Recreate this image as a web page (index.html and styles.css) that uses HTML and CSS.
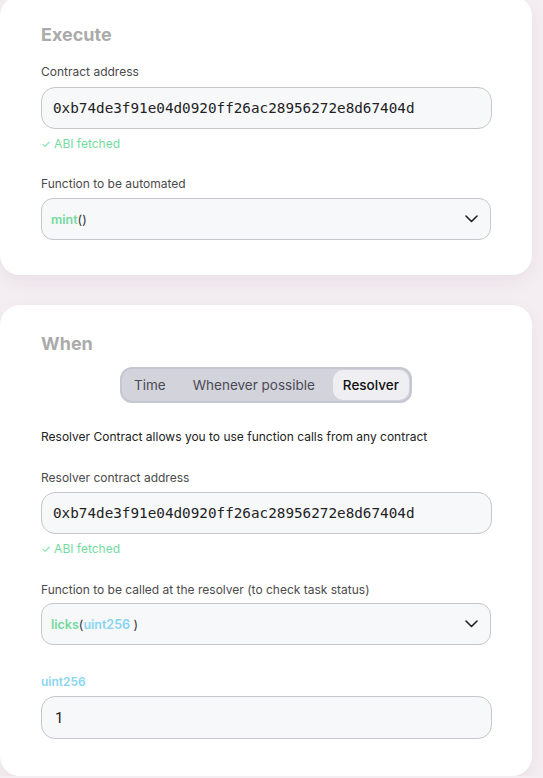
FILE: index.html
```html
<!DOCTYPE html>
<html>
<head>
<meta charset="utf-8">
<link rel="stylesheet" href="styles.css">
</head>
<body>
<div class="page">
  <section class="card card-first">
    <h2 class="card-title">Execute</h2>
    <div class="label label-first">Contract address</div>
    <div class="input mono">0xb74de3f91e04d0920ff26ac28956272e8d67404d</div>
    <div class="status"><span class="check">✓</span> ABI fetched</div>
    <div class="label label-gap">Function to be automated</div>
    <div class="select">
      <span class="fn"><span class="fn-name">mint</span>()</span>
      <svg class="chev" width="13" height="8" viewBox="0 0 13 8"><polyline points="1,1 6.5,6.5 12,1" fill="none" stroke="#222" stroke-width="1.6" stroke-linecap="round" stroke-linejoin="round"/></svg>
    </div>
  </section>

  <section class="card">
    <h2 class="card-title">When</h2>
    <div class="seg-wrap">
      <div class="seg">
        <span class="seg-item seg-time">Time</span>
        <span class="seg-item seg-when">Whenever possible</span>
        <span class="seg-item seg-active">Resolver</span>
      </div>
    </div>
    <p class="desc">Resolver Contract allows you to use function calls from any contract</p>
    <div class="label label-gap2">Resolver contract address</div>
    <div class="input mono">0xb74de3f91e04d0920ff26ac28956272e8d67404d</div>
    <div class="status"><span class="check">✓</span> ABI fetched</div>
    <div class="label label-gap3">Function to be called at the resolver (to check task status)</div>
    <div class="select select-tight">
      <span class="fn"><span class="fn-name">licks</span>(<span class="fn-arg">uint256</span> )</span>
      <svg class="chev" width="13" height="8" viewBox="0 0 13 8"><polyline points="1,1 6.5,6.5 12,1" fill="none" stroke="#222" stroke-width="1.6" stroke-linecap="round" stroke-linejoin="round"/></svg>
    </div>
    <div class="label label-arg">uint256</div>
    <div class="input input-num">1</div>
  </section>
</div>
</body>
</html>
```
FILE: styles.css
```css
html, body {
  margin: 0;
  padding: 0;
}
body {
  background: #f4eef2;
  font-family: Inter, "Noto Sans", sans-serif;
  color: #333;
}
.page {
  width: 532px;
  margin-top: -4px;
  display: flex;
  flex-direction: column;
  gap: 30px;
}
.card {
  background: #fff;
  border-radius: 20px;
  box-shadow: 0 6px 18px rgba(190, 160, 180, 0.18);
  padding: 27px 41px 37px 41px;
}
.card-first {
  padding-bottom: 35px;
}
.card-title {
  margin: 0;
  font-size: 18px;
  line-height: 24px;
  font-weight: 700;
  color: #ababab;
}
.label {
  font-size: 12px;
  line-height: 16px;
  color: #4a4a4a;
  margin-bottom: 7px;
}
.label-first { margin-top: 17px; }
.label-gap { margin-top: 24px; margin-bottom: 6px; }
.label-gap2 { margin-top: 25px; margin-bottom: 6px; }
.label-gap3 { margin-top: 25px; margin-bottom: 5px; }
.label-arg {
  margin-top: 29px;
  margin-bottom: 6px;
  color: #8ad6f0;
  font-weight: 600;
}
.input {
  box-sizing: border-box;
  height: 42px;
  width: 451px;
  border: 1px solid #c6c6cb;
  border-radius: 14px;
  background: #f7f8fa;
  display: flex;
  align-items: center;
  padding-left: 11px;
  color: #222;
}
.mono {
  font-family: "DejaVu Sans Mono", "Liberation Mono", monospace;
  font-size: 14.3px;
}
.input-num {
  height: 43px;
  font-size: 15px;
  font-family: Roboto, Inter, sans-serif;
  padding-left: 13px;
}
.status {
  margin-top: 7px;
  font-size: 12px;
  line-height: 16px;
  color: #72dc9f;
}
.check {
  font-size: 11px;
}
.select {
  box-sizing: border-box;
  height: 42px;
  width: 450px;
  border: 1px solid #c6c6cb;
  border-radius: 12px;
  background: #f7f8fa;
  display: flex;
  align-items: center;
  justify-content: space-between;
  padding: 0 12px 0 9px;
}
.fn {
  font-size: 12.5px;
  font-weight: 400;
  color: #333;
}
.fn-name { color: #74d9a0; font-weight: 600; }
.fn-arg { color: #86d5f0; font-weight: 600; }
.seg-wrap {
  display: flex;
  justify-content: center;
  margin-top: 11px;
}
.seg {
  box-sizing: border-box;
  height: 36px;
  display: flex;
  align-items: center;
  background: #d3d3dc;
  border: 2px solid #c6c6d0;
  border-radius: 12px;
  padding: 0 1px 0 12px;
}
.seg-item {
  font-size: 13.5px;
  color: #4a4a55;
  line-height: 30px;
}
.seg-time { margin-right: 27px; }
.seg-when { margin-right: 18px; }
.seg-active {
  background: #eeeef3;
  color: #111;
  font-weight: 500;
  border-radius: 10px;
  padding: 0 10px;
}
.desc {
  margin: 26px 0 0 0;
  font-size: 12px;
  line-height: 16px;
  color: #222;
}
```
